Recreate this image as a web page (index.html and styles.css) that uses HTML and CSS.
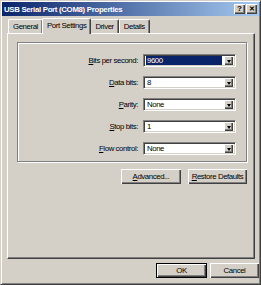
FILE: index.html
```html
<!DOCTYPE html>
<html lang="en">
<head>
    <meta charset="UTF-8">
    <title>USB Serial Port (COM8) Properties</title>
    <link rel="stylesheet" href="styles.css">
</head>
<body>

    <div class="window">
        <div class="titlebar">
            <span class="title">USB Serial Port (COM8) Properties</span>
            <div class="caption-buttons">
                <button class="caption-btn">?</button>
                <button class="caption-btn close">&#x2715;</button>
            </div>
        </div>

        <div class="tabs">
            <div class="tab">General</div>
            <div class="tab active">Port Settings</div>
            <div class="tab">Driver</div>
            <div class="tab">Details</div>
        </div>

        <div class="panel">
            <div class="group">
                <div class="row">
                    <label class="label"><u>B</u>its per second:</label>
                    <div class="combo">
                        <span class="value selected">9600</span>
                        <span class="arrow"></span>
                    </div>
                </div>
                <div class="row">
                    <label class="label"><u>D</u>ata bits:</label>
                    <div class="combo">
                        <span class="value">8</span>
                        <span class="arrow"></span>
                    </div>
                </div>
                <div class="row">
                    <label class="label"><u>P</u>arity:</label>
                    <div class="combo">
                        <span class="value">None</span>
                        <span class="arrow"></span>
                    </div>
                </div>
                <div class="row">
                    <label class="label"><u>S</u>top bits:</label>
                    <div class="combo">
                        <span class="value">1</span>
                        <span class="arrow"></span>
                    </div>
                </div>
                <div class="row">
                    <label class="label"><u>F</u>low control:</label>
                    <div class="combo">
                        <span class="value">None</span>
                        <span class="arrow"></span>
                    </div>
                </div>
            </div>

            <div class="actions">
                <button class="btn advanced"><u>A</u>dvanced...</button>
                <button class="btn restore"><u>R</u>estore Defaults</button>
            </div>
        </div>

        <div class="footer">
            <button class="btn ok default">OK</button>
            <button class="btn cancel">Cancel</button>
        </div>
    </div>

</body>
</html>
```

FILE: styles.css
```css
* {
    padding: 0;
    margin: 0;
    box-sizing: border-box;
}

body {
    width: 261px;
    height: 285px;
    background-color: #d4d0c8;
    font-family: "Liberation Sans", Arial, sans-serif;
    font-size: 7.8px;
    letter-spacing: -0.4px;
    color: #000;
}

u {
    text-decoration: underline;
    text-underline-offset: 1px;
}

.window {
    width: 261px;
    height: 285px;
    background-color: #d4d0c8;
    border: 1px solid;
    border-color: #d4d0c8 #404040 #404040 #d4d0c8;
    box-shadow: inset 1px 1px #fff, inset -1px -1px #808080;
    display: flex;
    flex-direction: column;
}

.titlebar {
    height: 14px;
    margin: 1px 1px 0 1px;
    background: linear-gradient(to right, #0a246a, #a6caf0);
    display: flex;
    align-items: center;
    justify-content: space-between;
    padding: 0 2px 0 2px;
}

.title {
    color: white;
    font-weight: bold;
    font-size: 7.8px;
    letter-spacing: -0.3px;
}

.caption-buttons {
    display: flex;
}

.caption-btn {
    width: 11px;
    height: 10px;
    border: none;
    background-color: #d4d0c8;
    box-shadow: inset 1px 1px #fff, inset -1px -1px #404040, inset -2px -2px #808080;
    font-family: "Liberation Sans", Arial, sans-serif;
    font-weight: bold;
    font-size: 8px;
    line-height: 10px;
    color: #000;
}

.caption-btn.close {
    margin-left: 1px;
    font-size: 7px;
}

.tabs {
    display: flex;
    align-items: flex-end;
    height: 16px;
    padding-left: 7px;
    margin-top: 1px;
}

.tab {
    height: 14px;
    padding: 0 4px;
    line-height: 13px;
    border-top: 1px solid #fff;
    border-left: 1px solid #fff;
    border-right: 1px solid #404040;
    border-radius: 2px 2px 0 0;
    box-shadow: inset -1px 0 #808080;
    position: relative;
    top: 0;
}

.tab.active {
    height: 16px;
    padding: 0 4px;
    margin: 0 -1px;
    line-height: 14px;
    background-color: #d4d0c8;
    z-index: 1;
    top: 1px;
}

.panel {
    height: 226px;
    margin: 0 6px 0 6px;
    width: 248px;
    border-top: 1px solid #fff;
    border-left: 1px solid #fff;
    border-right: 1px solid #404040;
    border-bottom: 1px solid #404040;
    box-shadow: inset -1px -1px #808080;
    display: flex;
    flex-direction: column;
    padding: 8px 7px 0 9px;
}

.group {
    height: 120px;
    border: 1px solid #808080;
    box-shadow: 1px 1px #fff, inset 1px 1px #fff;
    display: flex;
    flex-direction: column;
    gap: 9px;
    padding: 11px 10px 0 0;
}

.row {
    display: flex;
    align-items: center;
    justify-content: flex-end;
    gap: 5px;
    height: 13px;
}

.label {
    text-align: right;
}

.combo {
    width: 93px;
    height: 13px;
    background-color: #fff;
    border: 1px solid;
    border-color: #808080 #fff #fff #808080;
    box-shadow: inset 1px 1px #404040, inset -1px -1px #d4d0c8;
    display: flex;
    align-items: center;
    padding: 2px 2px 2px 2px;
}

.value {
    flex: 1;
    height: 9px;
    line-height: 9px;
    padding-left: 1px;
}

.value.selected {
    background-color: #0a246a;
    color: #fff;
    margin-right: 2px;
}

.arrow {
    width: 9px;
    height: 9px;
    background-color: #d4d0c8;
    box-shadow: inset 1px 1px #fff, inset -1px -1px #404040, inset -2px -2px #808080;
    display: flex;
    align-items: center;
    justify-content: center;
}

.arrow::after {
    content: "";
    border-left: 2.5px solid transparent;
    border-right: 2.5px solid transparent;
    border-top: 3px solid #000;
    margin-top: 1px;
}

.actions {
    display: flex;
    justify-content: flex-end;
    gap: 7px;
    margin-top: 7px;
}

.btn {
    height: 15px;
    border: none;
    background-color: #d4d0c8;
    box-shadow: inset 1px 1px #fff, inset -1px -1px #404040, inset -2px -2px #808080;
    font-family: "Liberation Sans", Arial, sans-serif;
    font-size: 7.8px;
    letter-spacing: -0.4px;
    color: #000;
}

.advanced {
    width: 60px;
}

.restore {
    width: 59px;
}

.footer {
    display: flex;
    justify-content: flex-end;
    gap: 3px;
    padding: 4px 1px 0 0;
}

.ok {
    width: 51px;
}

.cancel {
    width: 49px;
}

.btn.default {
    border: 1px solid #000;
    box-shadow: inset 1px 1px #fff, inset -1px -1px #404040, inset -2px -2px #808080;
}
```
